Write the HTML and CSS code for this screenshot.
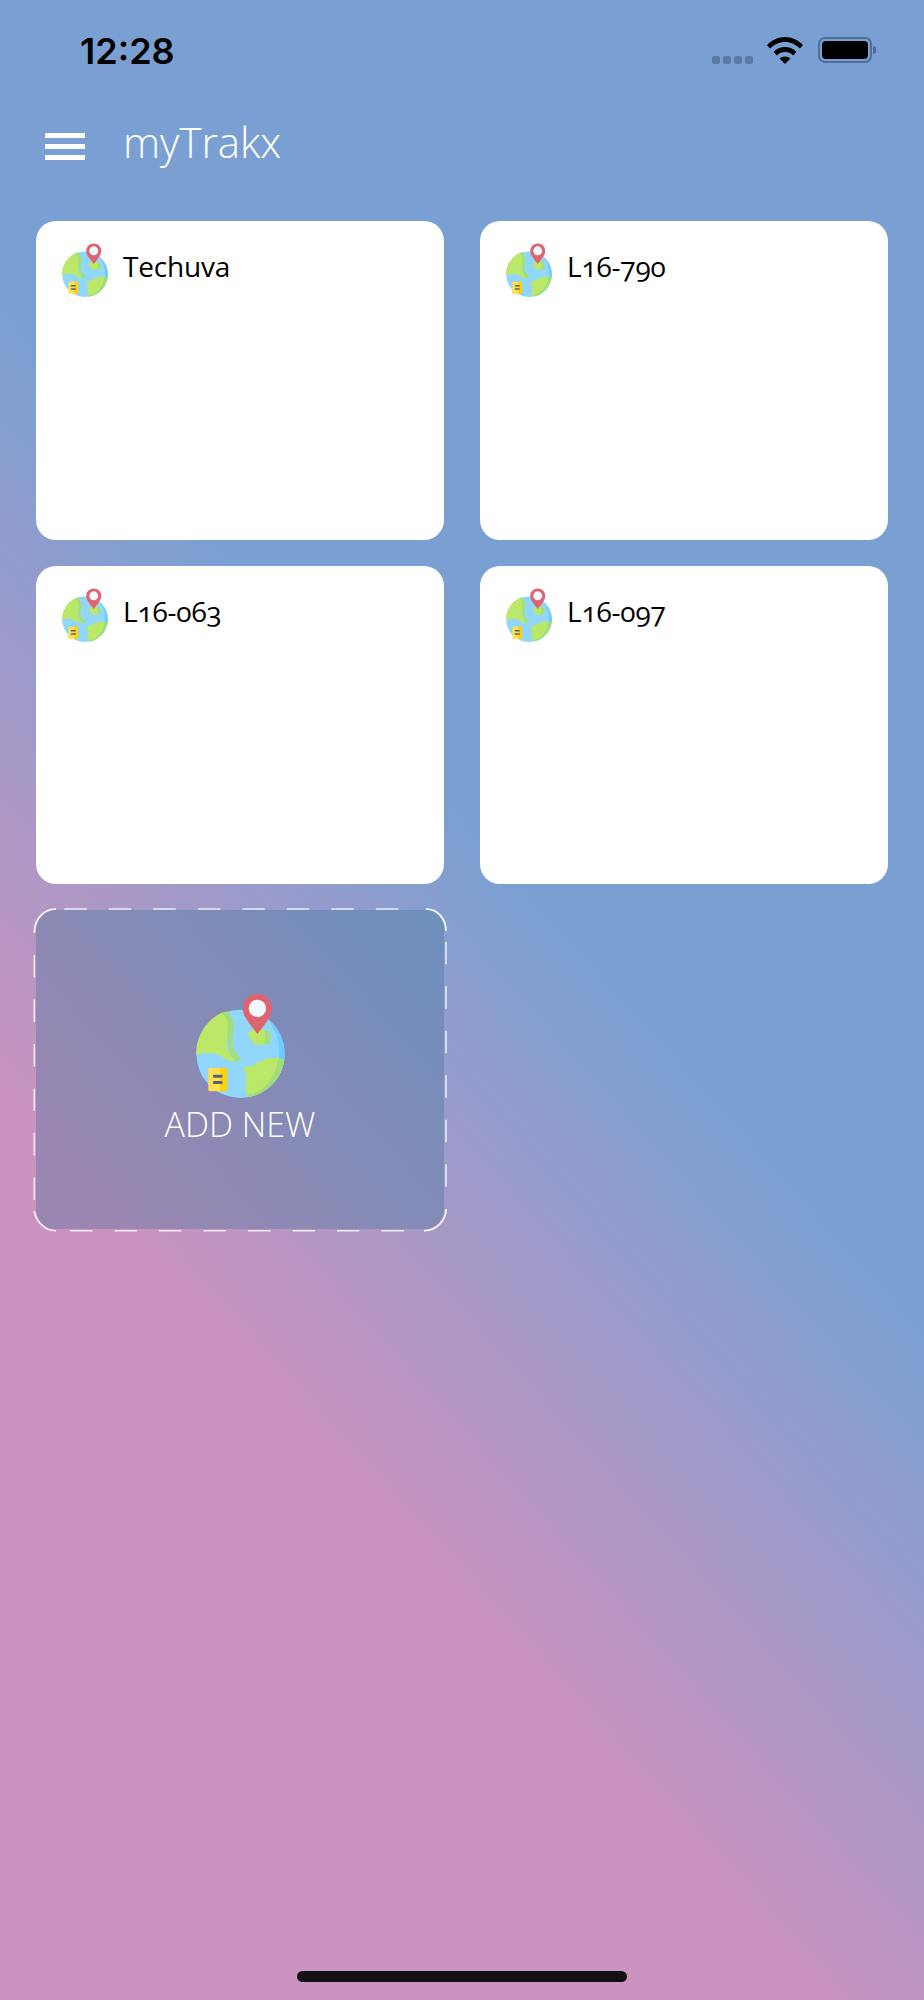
FILE: index.html
```html
<!DOCTYPE html>
<html lang="en">
  <head>
    <meta charset="UTF-8" />
    <meta name="viewport" content="width=device-width, initial-scale=1.0" />
    <title>myTrakx</title>
    <link rel="stylesheet" href="styles.css">
  </head>

  <body>
    <svg class="defs" width="0" height="0">
      <symbol id="globe" viewBox="520 310 280 320">
        <circle cx="660" cy="492" r="133" fill="#90d7fb" />
        <path d="M735 382A133 133 0 0 1 730 605A133 133 0 0 0 775 492A133 133 0 0 0 735 382Z" fill="#6fccff" />
        <path d="M605 368L622 364C632 380 643 395 640 415C636 440 632 465 645 485C650 495 658 502 664 507C655 514 645 516 635 515Z" fill="#a2de7e" />
        <path d="M605 368C616 382 624 395 622 415C619 440 615 465 625 485C630 497 637 507 645 513C625 517 610 505 597 496C575 486 550 488 527 496A133 133 0 0 1 605 368Z" fill="#bbe869" />
        <path d="M668 531C685 535 700 527 715 517C735 505 765 500 792 510A133 133 0 0 1 685 622C675 610 672 595 677 575C680 558 672 545 668 531Z" fill="#bbe869" />
        <path d="M772 508L792 510A133 133 0 0 1 685 622L681 616C730 610 770 560 772 508Z" fill="#9fdd7b" />
        <path d="M682 432L700 415L742 421C750 430 752 450 748 460C735 466 715 467 703 464C695 457 688 445 682 432Z" fill="#bbe869" />
        <path d="M730 419L742 421C750 430 752 450 748 460L728 465C735 450 735 432 730 419Z" fill="#a2de7e" />
        <rect x="563" y="535" width="56" height="70" rx="5" fill="#ffe14d" />
        <path d="M598 535H614A5 5 0 0 1 619 540V600A5 5 0 0 1 614 605H598Z" fill="#ffd100" />
        <rect x="577" y="555" width="29" height="9" rx="4" fill="#56607a" />
        <rect x="577" y="574" width="29" height="9" rx="4" fill="#56607a" />
        <path d="M711 432C690 405 667 380 667 356A44 44 0 0 1 755 356C755 380 732 405 711 432Z" fill="#e0646f" />
        <circle cx="711" cy="355" r="26" fill="#f2f9ff" />
      </symbol>
    </svg>

    <div class="status-bar">
      <span class="time">12:28</span>
      <div class="status-icons">
        <div class="signal"><i></i><i></i><i></i><i></i></div>
        <svg class="wifi" width="36" height="27" viewBox="0 0 36 27">
          <path d="M0 8.2C4.8 3 11 0 18 0S31.2 3 36 8.200L32.800 11.600C28.800 7.400 23.800 5 18 5S7.200 7.400 3.200 11.600Z" />
          <path d="M6.600 15C9.600 11.800 13.500 10 18 10S26.400 11.800 29.400 15L26.200 18.400C24 16.200 21.200 15 18 15S12 16.200 9.800 18.400Z" />
          <path d="M12.600 21.600C14 20.200 15.900 19.400 18 19.400S22 20.200 23.400 21.600L18 27Z" />
        </svg>
        <div class="battery"><div class="battery-level"></div></div>
        <div class="battery-nub"></div>
      </div>
    </div>

    <header class="app-header">
      <div class="menu-icon"><i></i><i></i><i></i></div>
      <h1>myTrakx</h1>
    </header>

    <main class="grid">
      <div class="card">
        <svg class="card-icon"><use href="#globe" /></svg>
        <span class="card-name">Techuva</span>
      </div>
      <div class="card">
        <svg class="card-icon"><use href="#globe" /></svg>
        <span class="card-name">L16-790</span>
      </div>
      <div class="card">
        <svg class="card-icon"><use href="#globe" /></svg>
        <span class="card-name">L16-063</span>
      </div>
      <div class="card">
        <svg class="card-icon"><use href="#globe" /></svg>
        <span class="card-name">L16-097</span>
      </div>
      <div class="add-card">
        <!-- dashes are drawn side by side, each side starts its own run -->
        <svg class="add-border" width="414" height="326" viewBox="0 0 414 326">
          <path class="dash-corner" d="M1.300 25C1.300 12 10 1 23 1" />
          <path class="dash-corner" d="M393 1C404 1 413 10 413 23" />
          <path class="dash-corner" d="M413 301C413 312 404 322.700 391 322.700" />
          <path class="dash-corner" d="M23 322.700C12 322.700 3 314 1.300 303" />
          <path class="dash-side" d="M31.300 1H385" />
          <path class="dash-side" d="M413 33.700V290" />
          <path class="dash-side" d="M37 322.700H380" />
          <path class="dash-side" d="M1.300 47V292" />
        </svg>
        <svg class="add-icon"><use href="#globe" /></svg>
        <span class="add-label">ADD NEW</span>
      </div>
    </main>

    <div class="home-bar"></div>
  </body>
</html>
```

FILE: styles.css
```css
* {
  box-sizing: border-box;
}

body {
  margin: 0;
  height: 2000px;
  display: flex;
  flex-direction: column;
  font-family: "Open Sans", "Noto Sans", sans-serif;
  background: linear-gradient(228deg, #7aa0d3 44%, #cb93bf 70%);
}

.defs {
  position: absolute;
}

.status-bar {
  height: 96px;
  display: flex;
  justify-content: space-between;
  padding: 29px 0 0 80px;
}

.time {
  font-family: Inter, sans-serif;
  font-size: 36px;
  font-weight: 600;
  line-height: 44px;
  color: #000;
}

.status-icons {
  display: flex;
  align-items: flex-start;
  padding: 8px 48px 0 0;
}

.signal {
  display: flex;
  gap: 3.500px;
  margin-top: 19px;
  margin-right: 14.500px;
}

.signal i {
  width: 7.500px;
  height: 7.500px;
  border-radius: 2px;
  background-color: #5b7ba6;
}

.wifi {
  margin-top: -0.500px;
  margin-right: 15px;
}

.battery {
  width: 54px;
  height: 26px;
  padding: 2px;
  border: 2px solid #4f6f98;
  border-radius: 7px;
}

.battery-level {
  height: 100%;
  border-radius: 4px;
  background-color: #000;
}

.battery-nub {
  width: 3px;
  height: 8px;
  margin: 9px 0 0 1px;
  border-radius: 0 4px 4px 0;
  background-color: #4f6f98;
}

.app-header {
  height: 125px;
  display: flex;
  align-items: flex-start;
  padding-left: 45px;
}

.menu-icon {
  width: 40px;
  display: flex;
  flex-direction: column;
  gap: 5.800px;
  margin-top: 37px;
}

.menu-icon i {
  height: 5px;
  background-color: #fff;
}

.app-header h1 {
  margin: 16px 0 0 38px;
  font-size: 42px;
  font-weight: 300;
  line-height: 60px;
  color: #fff;
}

.grid {
  display: grid;
  grid-template-columns: 408px 408px;
  grid-template-rows: 319px 318px 319px;
  column-gap: 36px;
  row-gap: 26px;
  padding-left: 36px;
}

.card {
  display: flex;
  align-items: flex-start;
  gap: 14px;
  padding: 22px 0 0 25px;
  border-radius: 20px;
  background-color: #fff;
}

.card-icon {
  width: 48px;
  height: 55px;
}

.card-name {
  margin-top: 3px;
  font-size: 28px;
  line-height: 40px;
  letter-spacing: -0.200px;
  font-variant-numeric: oldstyle-nums;
  color: #000;
}

.add-card {
  position: relative;
  display: flex;
  flex-direction: column;
  align-items: center;
  padding-top: 83px;
  border-radius: 20px;
  background-color: rgba(55, 112, 148, 0.33);
}

.add-border {
  position: absolute;
  top: -2px;
  left: -3px;
  fill: none;
  stroke: #fff;
  stroke-width: 1.600;
}

.dash-side {
  stroke-dasharray: 22.500 22;
  opacity: 0.8;
}

.add-icon {
  width: 93px;
  height: 107px;
}

.add-label {
  margin-top: 2px;
  font-size: 34px;
  font-weight: 300;
  line-height: 44px;
  color: #fff;
}

.home-bar {
  width: 330px;
  height: 11px;
  margin: auto auto 18px;
  border-radius: 6px;
  background-color: #111;
}
```
